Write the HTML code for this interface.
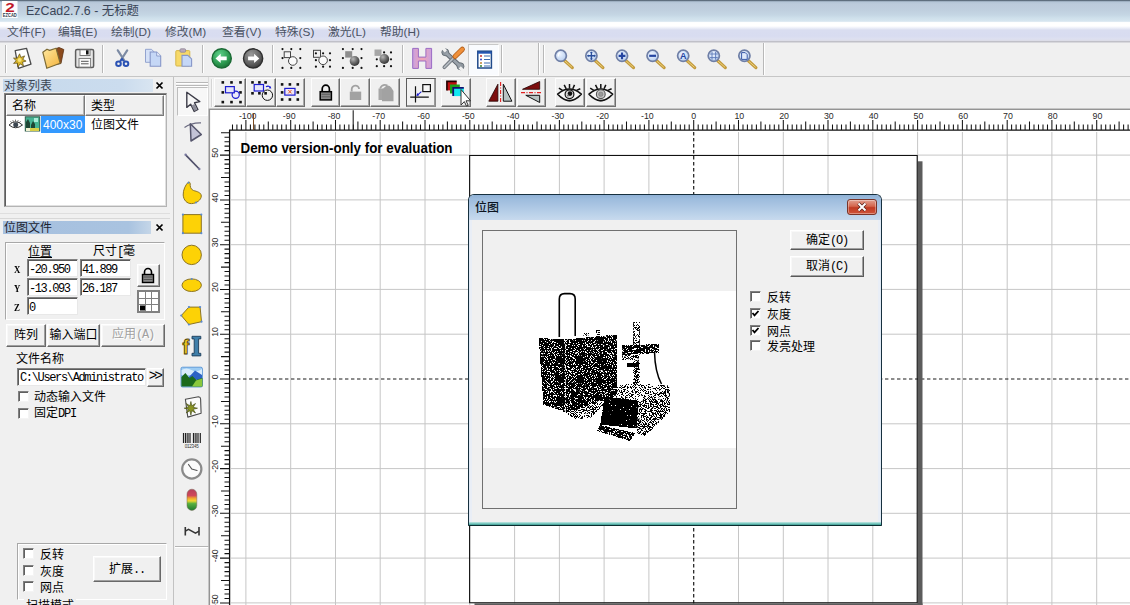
<!DOCTYPE html>
<html lang="zh-CN">
<head>
<meta charset="utf-8">
<title>EzCad2.7.6 - 无标题</title>
<style>
*{box-sizing:border-box;margin:0;padding:0}
html,body{width:1130px;height:605px;overflow:hidden;background:#f0f0f0}
body{position:relative;font-family:"Liberation Sans","Noto Sans CJK SC",sans-serif;font-size:12px;color:#000;line-height:1}
.abs{position:absolute}
#titlebar{position:absolute;left:0;top:0;width:1130px;height:22px;background:linear-gradient(#34424f 0,#8b9cae 1px,#b4c5d6 2px,#bccbdb 4px,#bfcfde 10px,#c5d6e4 15px,#cee0eb 18px,#d6e5ef 21px,#e6eff6 22px)}
#titlebar .ttl{position:absolute;left:26px;top:4px;font-size:12.4px;line-height:14px;color:#3a4658;white-space:nowrap}
#menubar{position:absolute;left:0;top:22px;width:1130px;height:21px;background:linear-gradient(#fbfdfe 0,#ffffff 1px,#ffffff 4px,#eceff9 6px,#d9ddf0 8px,#d8dcf0 14px,#dde0f0 17px,#dcdde8 18.500px,#c0c0c8 19.500px,#d8d8dc 20.500px,#f0f0f0 21px)}
#menubar span{position:absolute;top:3px;font-size:11.8px;line-height:14px;color:#4a5262;white-space:nowrap}
#toolbar{position:absolute;left:0;top:43px;width:1130px;height:34px;background:#f0f0f0;border-bottom:1px solid #c6c6c6}
.sep{position:absolute;width:2px;border-left:1px solid #b8b8b8;border-right:1px solid #fff}
.simsun{font-family:"Liberation Mono","Noto Sans CJK SC",monospace;letter-spacing:-1.2px}
.z{letter-spacing:0}
.cjk{font-family:"Liberation Sans","Noto Sans CJK SC",sans-serif}
.btn{position:absolute;background:#f0f0f0;border:1px solid;border-color:#fff #696969 #696969 #fff;box-shadow:inset -1px -1px 0 #a0a0a0,inset 1px 1px 0 #f8f8f8;text-align:center;white-space:nowrap}
.inp{position:absolute;background:#fff;border:1px solid;border-color:#828282 #e8e8e8 #e8e8e8 #828282;box-shadow:inset 1px 1px 0 #5a5a5a;white-space:nowrap;overflow:hidden}
.chk{position:absolute;width:11px;height:11px;background:#fff;border:1px solid;border-color:#808080 #f4f4f4 #f4f4f4 #808080;box-shadow:inset 1px 1px 0 #606060}
.tb2{position:absolute;top:78px;height:29px;background:#f0f0f0;border:1px solid;border-color:#fdfdfd #6e6e6e #6e6e6e #fdfdfd;box-shadow:inset -1px -1px 0 #a8a8a8}
</style>
</head>
<body>
<div id="titlebar">
 <svg class="abs" style="left:1.500px;top:1px" width="16" height="17" viewBox="0 0 16 17"><rect width="15.500" height="17" fill="#fdfdfd"/><text x="8" y="11.300" font-family="Liberation Sans,sans-serif" font-weight="bold" font-size="13" fill="#c01828" text-anchor="middle" textLength="9.500" lengthAdjust="spacingAndGlyphs">2</text><text x="7.800" y="16.300" font-family="Liberation Sans,sans-serif" font-weight="bold" font-size="4.600" fill="#2c3848" text-anchor="middle" textLength="14" lengthAdjust="spacingAndGlyphs">EZCAD</text></svg>
 <div class="ttl">EzCad2.7.6 - 无标题</div>
</div>
<div id="menubar">
 <span style="left:7px">文件(F)</span><span style="left:58px">编辑(E)</span><span style="left:111px">绘制(D)</span><span style="left:165px">修改(M)</span><span style="left:222px">查看(V)</span><span style="left:275px">特殊(S)</span><span style="left:328px">激光(L)</span><span style="left:380px">帮助(H)</span>
</div>
<div id="toolbar"></div>
<!-- main toolbar icons (page coordinates) -->
<div class="abs" style="left:468px;top:44px;width:31px;height:32px;background:#f9fbfe;border:1px solid;border-color:#c8c8c8 #fff #fff #c8c8c8"></div>
<div class="sep" style="left:5px;top:45px;height:28px"></div>
<div class="sep" style="left:102px;top:45px;height:28px"></div>
<div class="sep" style="left:202px;top:45px;height:28px"></div>
<div class="sep" style="left:272px;top:45px;height:28px"></div>
<div class="sep" style="left:402px;top:45px;height:28px"></div>
<div class="sep" style="left:501px;top:45px;height:28px"></div>
<div class="sep" style="left:538px;top:43px;height:32px"></div>
<div class="sep" style="left:543px;top:45px;height:28px"></div>
<div class="sep" style="left:763px;top:43px;height:32px"></div>
<svg class="abs" style="left:0;top:41px" width="1130" height="36" viewBox="0 41 1130 36">
<defs>
 <linearGradient id="gfold" x1="0" y1="0" x2="1" y2="1"><stop offset="0" stop-color="#ffe9a0"/><stop offset="1" stop-color="#f3b23c"/></linearGradient>
 <radialGradient id="ggreen" cx=".4" cy=".3" r=".8"><stop offset="0" stop-color="#5fd08a"/><stop offset=".6" stop-color="#2c9a50"/><stop offset="1" stop-color="#17662f"/></radialGradient>
 <radialGradient id="ggray" cx=".4" cy=".3" r=".8"><stop offset="0" stop-color="#9a9a9a"/><stop offset=".6" stop-color="#626262"/><stop offset="1" stop-color="#303030"/></radialGradient>
 <radialGradient id="gsph" cx=".35" cy=".3" r=".8"><stop offset="0" stop-color="#b8b8b8"/><stop offset=".5" stop-color="#6a6a6a"/><stop offset="1" stop-color="#2a2a2a"/></radialGradient>
 <radialGradient id="glens" cx=".4" cy=".35" r=".7"><stop offset="0" stop-color="#eef5ff"/><stop offset="1" stop-color="#b6cdef"/></radialGradient>
 <linearGradient id="gH" x1="0" y1="0" x2="1" y2="0"><stop offset="0" stop-color="#c9a0e0"/><stop offset=".5" stop-color="#f2a6b4"/><stop offset="1" stop-color="#c9a0e0"/></linearGradient>
 <g id="mag"><path d="M4 5L11.500 11.800" stroke="#c39a3c" stroke-width="3.200" stroke-linecap="round"/><path d="M4.500 5.500L11 11.300" stroke="#ecd27c" stroke-width="1" stroke-linecap="round"/><circle cx="0" cy="0" r="5.600" fill="url(#glens)" stroke="#6f7fa6" stroke-width="1.700"/></g>
</defs>
<!-- new -->
<path d="M15.200 50.600L26.500 48.300L31 64.200L18.400 68.400Z" fill="#fff" stroke="#4c4c4c" stroke-width="1.300" stroke-linejoin="round"/>
<path d="M19.600 53.800l1.300 3.600 3.700-1.500-1.800 3.500 3.300 1.700-3.600 1.100 1 3.700-3.300-2-2.300 3-0.600-3.800-3.800.3 2.700-2.700-2.700-2.600 3.800.1z" fill="#d9b62c" stroke="#5c4a12" stroke-width=".7"/>
<circle cx="19.600" cy="60" r="2" fill="#f6e27a"/>
<!-- folder -->
<path d="M55 49l4-1.500 4.800 2L61 63.500l-5 1z" fill="#8c4a1c" stroke="#5a3010" stroke-width=".8"/>
<path d="M42.800 52.200l4.200-3 2.600 1.200 6.400-2.200L60.200 63.300 46.800 68.300Z" fill="url(#gfold)" stroke="#7c6a34" stroke-width="1.200" stroke-linejoin="round"/>
<!-- floppy -->
<rect x="75.600" y="49.500" width="18" height="18" rx="1.500" fill="#e6e6e6" stroke="#5e5e5e" stroke-width="1.500"/>
<rect x="80" y="49.800" width="10" height="5.700" fill="#fff" stroke="#6a6a6a" stroke-width=".9"/><rect x="86" y="50.300" width="2.600" height="4.200" fill="#111"/>
<rect x="79" y="58.500" width="11.600" height="8.600" fill="#fafafa" stroke="#777" stroke-width=".9"/><path d="M81 61.300h7.600M81 63.800h7.600" stroke="#555" stroke-width="1"/>
<!-- scissors -->
<path d="M117.800 50.300L124.300 60.500M127.200 50.300L120.600 60.500" stroke="#7c8ba4" stroke-width="2.200" stroke-linecap="round"/>
<circle cx="118.500" cy="63.800" r="2.300" fill="none" stroke="#2a52b4" stroke-width="2"/><circle cx="126" cy="63.800" r="2.300" fill="none" stroke="#2a52b4" stroke-width="2"/>
<path d="M120.300 61.300l1.700-2.300 1.700 2.300" stroke="#2a52b4" stroke-width="1.800" fill="none"/>
<!-- copy -->
<path d="M145.500 49.300h6l3 3v10h-9z" fill="#d5e1f7" stroke="#93a3cf" stroke-width="1"/>
<path d="M150.200 52h6.500l4 4v10.300h-10.500z" fill="#c5d7f6" stroke="#8696c8" stroke-width="1.100"/><path d="M156.700 52v4h4" fill="#e9f0fc" stroke="#8696c8" stroke-width=".9"/>
<!-- paste -->
<rect x="175.800" y="50.600" width="14" height="15.400" rx="1" fill="#f7d968" stroke="#d6b74a" stroke-width="1"/>
<rect x="180" y="48.800" width="5.600" height="3.400" rx="1" fill="#b9a9b9" stroke="#8f8797" stroke-width=".8"/>
<path d="M182 55.400h5.800l3.800 3.500v7.400H182z" fill="#c5d7f6" stroke="#8696c8" stroke-width="1.100"/>
<!-- back / forward -->
<circle cx="221.700" cy="58.400" r="9.600" fill="url(#ggreen)" stroke="#1a6a34" stroke-width="1.400"/>
<path d="M215.500 58.400l5.200-4.600v2.700h6v3.800h-6v2.700z" fill="#fff"/>
<circle cx="253.100" cy="58.400" r="9.600" fill="url(#ggray)" stroke="#2e2e2e" stroke-width="1.400"/>
<path d="M259.300 58.400l-5.200-4.600v2.700h-6v3.800h6v2.700z" fill="#fff"/>
<!-- group icons -->
<g fill="#111">
<circle cx="282.500" cy="49.100" r="1.100"/><circle cx="291.300" cy="49.100" r="1.100"/><circle cx="300.300" cy="49.100" r="1.100"/><circle cx="282.500" cy="58.100" r="1.100"/><circle cx="300.300" cy="58.100" r="1.100"/><circle cx="282.500" cy="67.900" r="1.100"/><circle cx="291.300" cy="67.900" r="1.100"/><circle cx="300.300" cy="67.900" r="1.100"/>
<circle cx="315.900" cy="53.300" r="1.100"/><circle cx="323.100" cy="53.300" r="1.100"/><circle cx="330" cy="53.300" r="1.100"/><circle cx="315.900" cy="60.200" r="1.100"/><circle cx="330" cy="60.200" r="1.100"/><circle cx="315.900" cy="66.700" r="1.100"/><circle cx="323.100" cy="66.700" r="1.100"/><circle cx="330" cy="66.700" r="1.100"/>
<circle cx="342.900" cy="49.100" r="1.100"/><circle cx="352.700" cy="49.100" r="1.100"/><circle cx="361.500" cy="49.100" r="1.100"/><circle cx="342.900" cy="58.100" r="1.100"/><circle cx="361.500" cy="58.100" r="1.100"/><circle cx="342.900" cy="67.900" r="1.100"/><circle cx="352.700" cy="67.900" r="1.100"/><circle cx="361.500" cy="67.900" r="1.100"/>
<circle cx="376.800" cy="52.400" r="1.100"/><circle cx="384.100" cy="52.400" r="1.100"/><circle cx="391" cy="52.400" r="1.100"/><circle cx="376.800" cy="59.300" r="1.100"/><circle cx="391" cy="59.300" r="1.100"/><circle cx="376.800" cy="66.200" r="1.100"/><circle cx="384.100" cy="66.200" r="1.100"/><circle cx="391" cy="66.200" r="1.100"/>
</g>
<rect x="284.200" y="51.800" width="6.300" height="5.800" fill="#f4f4f4" stroke="#444" stroke-width="1"/><circle cx="292.800" cy="61" r="4.300" fill="#fbfbfb" stroke="#444" stroke-width="1"/>
<rect x="313.500" y="50.300" width="7" height="7" fill="none" stroke="#444" stroke-width="1"/><circle cx="323.100" cy="60.300" r="4.300" fill="#fbfbfb" stroke="#444" stroke-width="1"/>
<rect x="345.200" y="51.200" width="7" height="6.400" fill="#8e8e8e"/><circle cx="354.600" cy="61" r="4.900" fill="url(#gsph)"/>
<rect x="374.500" y="49.500" width="7" height="6.400" fill="#a6a6a6"/><circle cx="384.300" cy="59" r="4.900" fill="url(#gsph)"/>
<!-- H -->
<path d="M412.700 48.400h5.700v8.700h7.500v-8.700h5.700v20h-5.700v-7.400h-7.500v7.400h-5.700z" fill="url(#gH)" stroke="#9a6cc4" stroke-width="1"/>
<!-- tools -->
<path d="M446 53L460 66" stroke="#5c646c" stroke-width="4.600"/><circle cx="445.300" cy="52.300" r="3.500" fill="#8e969e" stroke="#5c646c" stroke-width=".8"/><circle cx="460.500" cy="66.300" r="3.500" fill="#8e969e" stroke="#5c646c" stroke-width=".8"/>
<path d="M446 53L460 66" stroke="#9aa2aa" stroke-width="3"/>
<path d="M441.200 48.800l3.600 3.600 2.200-2.200-3.600-3.600z" fill="#f0f0f0"/><path d="M464.400 69.800l-3.600-3.600-2.200 2.200 3.600 3.600z" fill="#f0f0f0"/>
<path d="M455 56.500L444.300 67.300" stroke="#6a7078" stroke-width="3.600" stroke-linecap="round"/><path d="M455 56.500L444.300 67.300" stroke="#b4bac0" stroke-width="1.800" stroke-linecap="round"/>
<path d="M462.300 49.300L455 56.500" stroke="#b4601c" stroke-width="5.200" stroke-linecap="round"/><path d="M462.300 49.300L455.200 56.300" stroke="#f0903a" stroke-width="3.600" stroke-linecap="round"/>
<!-- list -->
<rect x="477.800" y="51.200" width="13.600" height="16.800" fill="#fff" stroke="#1f4a8a" stroke-width="1.500"/>
<path d="M477.800 52.700h13.600" stroke="#2456b4" stroke-width="2"/>
<path d="M484 56h6M484 59.500h6M484 63h6M484 66h6" stroke="#3a6ab0" stroke-width="1"/>
<circle cx="481" cy="56" r="1" fill="#c03030"/><circle cx="481" cy="59.500" r="1" fill="#3040c0"/><circle cx="481" cy="63" r="1" fill="#c08030"/><circle cx="481" cy="66" r="1" fill="#308030"/>
<!-- magnifiers -->
<use href="#mag" x="560.800" y="55.800"/><use href="#mag" x="591.400" y="55.800"/><use href="#mag" x="622" y="55.800"/><use href="#mag" x="652.600" y="55.800"/><use href="#mag" x="683.200" y="55.800"/><use href="#mag" x="713.800" y="55.800"/><use href="#mag" x="744.400" y="55.800"/>
<path d="M560 52.500c-1.500 1-2 2.500-1.800 4" stroke="#fff" stroke-width="1.200" fill="none"/>
<path d="M587.600 55.800h7.600M591.400 52v7.600" stroke="#2a4f9c" stroke-width="1.400"/><path d="M587 55.800l1.600-1.400v2.800zM595.800 55.800l-1.600-1.400v2.800zM591.400 51.400l-1.400 1.600h2.800zM591.400 60.200l-1.400-1.600h2.800z" fill="#2a4f9c"/>
<path d="M618.600 55.800h6.800M622 52.400v6.800" stroke="#2444a0" stroke-width="2.200"/>
<path d="M649.200 55.800h6.800" stroke="#2444a0" stroke-width="2.200"/>
<text x="683.200" y="59" font-family="Liberation Sans,sans-serif" font-size="9" font-weight="bold" fill="#2444a0" text-anchor="middle">A</text>
<path d="M709.800 54h8M709.800 57.600h8M712 51.800v8M715.600 51.800v8" stroke="#5a78b8" stroke-width=".9"/>
<path d="M741.600 52.600h3.600l2 2v4.800h-5.600z" fill="#dfe9fa" stroke="#3a5aa8" stroke-width="1"/>
</svg>
<!-- left panel -->
<div class="abs" style="left:0;top:77px;width:174px;height:528px;background:#f0f0f0;border-right:1px solid #c2c2c2"></div>
<div class="abs" style="left:3px;top:79px;width:150px;height:13px;background:linear-gradient(90deg,#c6d9ec,#cbdcee 80%,#d9e5f1)"></div>
<div class="abs cjk" style="left:4px;top:80px;font-size:12px;line-height:13px;color:#3c4654">对象列表</div>
<svg class="abs" style="left:155px;top:81px" width="9" height="9" viewBox="0 0 9 9"><path d="M1.5 1.5L7.5 7.5M7.5 1.5L1.5 7.5" stroke="#000" stroke-width="1.7"/></svg>
<div class="abs" style="left:4px;top:93px;width:163px;height:114px;background:#fff;border:1px solid;border-color:#828282 #b4b4b4 #b4b4b4 #828282;box-shadow:inset 1px 1px 0 #5c5c5c,inset -1px -1px 0 #e0e0e0"></div>
<div class="abs" style="left:6px;top:95px;width:79px;height:21px;background:#f0f0f0;border:1px solid;border-color:#fff #7a7a7a #7a7a7a #fff;box-shadow:inset -1px -1px 0 #b4b4b4"></div>
<div class="abs" style="left:85px;top:95px;width:79px;height:21px;background:#f0f0f0;border:1px solid;border-color:#fff #7a7a7a #7a7a7a #fff;box-shadow:inset -1px -1px 0 #b4b4b4"></div>
<div class="abs cjk" style="left:12px;top:99px;font-size:12px;line-height:14px">名称</div>
<div class="abs cjk" style="left:91px;top:99px;font-size:12px;line-height:14px">类型</div>
<div class="abs" style="left:41px;top:116px;width:44px;height:17px;background:#3399ff"></div>
<div class="abs" style="left:43px;top:118px;font-size:12px;line-height:14px;color:#fff">400x30</div>
<div class="abs cjk" style="left:91px;top:118px;font-size:12px;line-height:14px">位图文件</div>
<svg class="abs" style="left:8px;top:116px" width="34" height="18" viewBox="8 116 34 18">
 <path d="M9 125Q15.500 118.500 22.500 125Q15.500 130.500 9 125Z" fill="#fff" stroke="#333" stroke-width="1"/><circle cx="15.700" cy="124.800" r="2.500" fill="#3c4650"/>
 <path d="M10.500 121.300l1.200 1.500M15.500 119.600v1.700M20.500 121.300l-1.200 1.500M12.800 120.200l.7 1.600M18.200 120.200l-.7 1.600" stroke="#444" stroke-width=".8"/>
 <rect x="25.300" y="116.800" width="14.400" height="14.200" fill="#46b494" stroke="#2c5a48" stroke-width="1"/>
 <path d="M26 131v-9l2-3 2 4v8zM31 131v-6l2-4 2 3v7z" fill="#1e4634"/>
 <path d="M30 131v-3h9v3z" fill="#d8d048"/><path d="M34 118h4v4h-4z" fill="#a8ecd8"/><path d="M26 128h4v3h-4z" fill="#f0f0d0"/>
</svg>
<div class="abs" style="left:0;top:213px;width:170px;height:6px;border-top:1px solid #dedede;border-bottom:1px solid #d8d8d8"></div>
<div class="abs" style="left:3px;top:221px;width:148px;height:13px;background:linear-gradient(90deg,#a6c0df,#a9c3e0 85%,#c5d6e8)"></div>
<div class="abs cjk" style="left:4px;top:221px;font-size:12px;line-height:14px;color:#1c2430">位图文件</div>
<svg class="abs" style="left:155px;top:223px" width="9" height="9" viewBox="0 0 9 9"><path d="M1.5 1.5L7.5 7.5M7.5 1.5L1.5 7.5" stroke="#000" stroke-width="1.7"/></svg>
<!-- group box -->
<div class="abs" style="left:5px;top:242px;width:160px;height:78px;border:1px solid;border-color:#a8a8a8 #fff #fff #a8a8a8;box-shadow:inset 1px 1px 0 #fff,1px 1px 0 #fff inset"></div>
<div class="abs cjk" style="left:28px;top:245px;font-size:12px;line-height:14px;text-decoration:underline">位置</div>
<div class="abs simsun" style="left:93px;top:245px;font-size:12px;line-height:14px"><span class="z">尺寸</span>[<span class="z">毫</span></div>
<div class="abs" style="left:14px;top:263px;font-family:'Liberation Serif',serif;font-weight:bold;font-size:11px;line-height:12px;transform:scaleX(.8);transform-origin:0 0">X</div>
<div class="abs" style="left:14px;top:282px;font-family:'Liberation Serif',serif;font-weight:bold;font-size:11px;line-height:12px;transform:scaleX(.8);transform-origin:0 0">Y</div>
<div class="abs" style="left:14px;top:301px;font-family:'Liberation Serif',serif;font-weight:bold;font-size:11px;line-height:12px;transform:scaleX(.8);transform-origin:0 0">Z</div>
<div class="inp simsun" style="left:27px;top:259px;width:51px;height:18px;padding:4px 0 0 1px;font-size:12px;line-height:12px;letter-spacing:-1.4px">-20.950</div>
<div class="inp simsun" style="left:80px;top:259px;width:51px;height:18px;padding:4px 0 0 1px;font-size:12px;line-height:12px;letter-spacing:-1.4px">41.899</div>
<div class="inp simsun" style="left:27px;top:278px;width:51px;height:18px;padding:4px 0 0 1px;font-size:12px;line-height:12px;letter-spacing:-1.4px">-13.093</div>
<div class="inp simsun" style="left:80px;top:278px;width:51px;height:18px;padding:4px 0 0 1px;font-size:12px;line-height:12px;letter-spacing:-1.4px">26.187</div>
<div class="inp simsun" style="left:27px;top:297px;width:51px;height:18px;padding:4px 0 0 1px;font-size:12px;line-height:12px;letter-spacing:-1.4px">0</div>
<div class="btn" style="left:137px;top:264px;width:23px;height:23px"></div>
<svg class="abs" style="left:137px;top:264px" width="23" height="23" viewBox="0 0 23 23"><rect x="5.5" y="10.5" width="11" height="8" fill="#8a8a8a" stroke="#000" stroke-width="1.4"/><path d="M7.5 10.5V8a3.5 3.5 0 0 1 7 0v2.5" fill="none" stroke="#000" stroke-width="1.6"/><path d="M6.5 13h9M6.5 15.5h9" stroke="#444" stroke-width=".8"/></svg>
<div class="abs" style="left:137px;top:290px;width:23px;height:23px;background:#fff;border:2px solid #808080"></div>
<svg class="abs" style="left:137px;top:290px" width="23" height="23" viewBox="0 0 23 23"><path d="M8.5 2v19M14.5 2v19M2 8.500h19M2 14.500h19" stroke="#808080" stroke-width="1"/><rect x="3" y="15.500" width="5" height="5" fill="#000"/></svg>
<div class="btn cjk" style="left:6px;top:324px;width:40px;height:23px;font-size:12px;line-height:20px">阵列</div>
<div class="btn cjk" style="left:47px;top:324px;width:53px;height:23px;font-size:12px;line-height:20px">输入端口</div>
<div class="btn simsun" style="left:101px;top:324px;width:64px;height:23px;font-size:12px;line-height:20px;color:#a0a0a0;text-shadow:1px 1px 0 #fff"><span class="z">应用</span>(A)</div>
<div class="abs cjk" style="left:16px;top:352px;font-size:12px;line-height:14px">文件名称</div>
<div class="inp simsun" style="left:17px;top:368px;width:129px;height:18px;padding:3px 0 0 2px;font-size:12px;line-height:12px;letter-spacing:-1.35px">C:\Users\Administrato</div>
<div class="btn simsun" style="left:147px;top:368px;width:17px;height:19px;font-size:14px;line-height:15px;letter-spacing:-2.6px;text-indent:-2px">&gt;&gt;</div>
<div class="chk" style="left:18px;top:391px"></div>
<div class="abs cjk" style="left:34px;top:390px;font-size:12px;line-height:14px">动态输入文件</div>
<div class="chk" style="left:18px;top:408px"></div>
<div class="abs simsun" style="left:34px;top:407px;font-size:12px;line-height:14px"><span class="z">固定</span>DPI</div>
<!-- bottom group -->
<div class="abs" style="left:17px;top:543px;width:150px;height:57px;border:1px solid;border-color:#a8a8a8 #fff #fff #a8a8a8;box-shadow:inset 1px 1px 0 #fff"></div>
<div class="chk" style="left:23px;top:548px"></div>
<div class="chk" style="left:23px;top:565px"></div>
<div class="chk" style="left:23px;top:581px"></div>
<div class="abs cjk" style="left:40px;top:548px;font-size:12px;line-height:14px">反转</div>
<div class="abs cjk" style="left:40px;top:565px;font-size:12px;line-height:14px">灰度</div>
<div class="abs cjk" style="left:40px;top:581px;font-size:12px;line-height:14px">网点</div>
<div class="btn simsun" style="left:93px;top:556px;width:68px;height:26px;font-size:12px;line-height:26px"><span class="z">扩展</span>..</div>
<div class="abs cjk" style="left:24px;top:599px;font-size:12px;line-height:14px;background:#f0f0f0;padding:0 2px">扫描模式</div>
<!-- tools column + second toolbar -->
<div class="abs" style="left:208px;top:77px;width:1px;height:470px;background:#dadada"></div>
<div class="abs" style="left:175px;top:546px;width:34px;height:2px;border-top:1px solid #b4b4b4;border-bottom:1px solid #fff"></div>
<div class="abs" style="left:176px;top:82px;width:32px;height:2px;border-top:1px solid #b8b8b8;border-bottom:1px solid #fff"></div>
<div class="abs" style="left:176px;top:85px;width:32px;height:2px;border-top:1px solid #b8b8b8;border-bottom:1px solid #fff"></div>
<div class="abs" style="left:177px;top:87px;width:31px;height:29px;background:#f7f7f7;border:1px solid;border-color:#bdbdbd #fff #fff #bdbdbd"></div>
<div class="abs" style="left:211px;top:79px;width:2px;height:28px;border-left:1px solid #d4d4d4;border-right:1px solid #fafafa"></div>
<div class="tb2" style="left:214px;width:32px"></div><div class="tb2" style="left:246px;width:30px"></div><div class="tb2" style="left:276px;width:29px"></div>
<div class="tb2" style="left:311px;width:29px"></div><div class="tb2" style="left:340px;width:30px"></div><div class="tb2" style="left:370px;width:30px"></div>
<div class="abs" style="left:406px;top:78px;width:30px;height:29px;background:#f2f2f2;border:1px solid;border-color:#5c5c5c #8a8a8a #8a8a8a #5c5c5c;box-shadow:inset -1px -1px 0 #9a9a9a"></div>
<div class="tb2" style="left:441px;width:30px"></div>
<div class="tb2" style="left:486px;width:30px"></div><div class="tb2" style="left:517px;width:29px"></div>
<div class="tb2" style="left:555px;width:30px"></div><div class="tb2" style="left:586px;width:30px"></div>
<svg class="abs" style="left:174px;top:77px" width="460" height="475" viewBox="174 77 460 475" font-family="Liberation Sans,sans-serif">
<defs>
 <linearGradient id="gsky" x1="0" y1="0" x2="0" y2="1"><stop offset="0" stop-color="#2a6ad8"/><stop offset=".5" stop-color="#7ab8f0"/><stop offset=".55" stop-color="#3a9a3a"/><stop offset="1" stop-color="#1e6a22"/></linearGradient>
 <linearGradient id="gtl" x1="0" y1="0" x2="0" y2="1"><stop offset="0" stop-color="#b4405c"/><stop offset=".3" stop-color="#d0485a"/><stop offset=".42" stop-color="#f0a030"/><stop offset=".55" stop-color="#f0d830"/><stop offset=".68" stop-color="#58b040"/><stop offset="1" stop-color="#1e7a30"/></linearGradient>
 <g id="eye"><path d="M-11.800 0Q-6 -5.200 0 -5.200Q6 -5.200 11.800 0Q6 6.300 0 6.300Q-6 6.300 -11.800 0Z" fill="#f6f6f6" stroke="#111" stroke-width="1.600" stroke-linejoin="round"/><path d="M0 -5.800V-10.300M-3.300 -5.400L-5.300 -9.300M3.300 -5.400L5 -9.300M-7 -3.800L-10.600 -6M7 -3.800L10.800 -5.400" stroke="#111" stroke-width="1.500"/><path d="M-3.500 6Q0 7.200 3.500 6" stroke="#111" stroke-width="1.400" fill="none"/></g>
</defs>
<!-- arrow tool -->
<path d="M186.800 92.300V107.400L190.700 104.300L194.200 111.400L197.900 109.500L194.500 102.800L199.800 101.600Z" fill="#f6f6f6" stroke="#3c3c48" stroke-width="1.400" stroke-linejoin="round"/>
<path d="M191.500 105.500l3 5.500 2.800-1.400-2.800-5.500z" fill="#8c8c98"/>
<!-- node tool -->
<path d="M184.500 127.500Q191 122.500 201 122.800" fill="none" stroke="#6a6a80" stroke-width="1.200"/>
<path d="M190.300 123.800L191 141L201.300 134.500Z" fill="#c2c2d6" stroke="#55556c" stroke-width="1.500" stroke-linejoin="round"/>
<!-- line tool -->
<path d="M185.600 154.800L199.300 169" stroke="#50506a" stroke-width="1.700"/><circle cx="185.600" cy="154.800" r="1.200" fill="#7a7aa0"/><circle cx="199.300" cy="169" r="1.200" fill="#7a7aa0"/>
<!-- blob -->
<path d="M188 182.500C185.500 185 183 190 183.200 195C183.500 200 187 203.800 191.500 203.600C196.500 203.400 201.200 200 201.300 196C201.300 192.500 197 191.500 193.500 190.500C190.500 189.500 190 186 190.200 183.500C190 182 188.800 181.800 188 182.500Z" fill="#fdd206" stroke="#8c7424" stroke-width="1"/><circle cx="188.500" cy="182.800" r="1" fill="#5a8ad0"/><circle cx="196" cy="202.600" r="1" fill="#5a8ad0"/>
<!-- square -->
<rect x="182.900" y="214.600" width="18.400" height="18.600" fill="#fdd206" stroke="#8c7424" stroke-width="1"/>
<g fill="#5a8ad0"><circle cx="182.900" cy="214.600" r="1.100"/><circle cx="201.300" cy="214.600" r="1.100"/><circle cx="182.900" cy="233.200" r="1.100"/><circle cx="201.300" cy="233.200" r="1.100"/></g>
<!-- circle -->
<circle cx="191.700" cy="254.900" r="9.700" fill="#fdd206" stroke="#8c7424" stroke-width="1"/>
<!-- ellipse -->
<ellipse cx="191.700" cy="285.200" rx="9.700" ry="6.300" fill="#fdd206" stroke="#8c7424" stroke-width="1"/><circle cx="191.700" cy="279" r="1" fill="#5a8ad0"/>
<!-- polygon -->
<path d="M188.900 307.100L200.100 307.100L201.500 321.700L188.900 324.500L181.300 315.500Z" fill="#fdd206" stroke="#8c7424" stroke-width="1"/>
<g fill="#5a8ad0"><circle cx="188.900" cy="307.100" r="1.100"/><circle cx="200.100" cy="307.100" r="1.100"/><circle cx="201.500" cy="321.700" r="1.100"/><circle cx="188.900" cy="324.500" r="1.100"/><circle cx="181.300" cy="315.500" r="1.100"/></g>
<!-- text tool -->
<text x="182.600" y="354.200" font-size="20" font-weight="bold" fill="#f6cf22" stroke="#4a3c0c" stroke-width=".9" font-family="Liberation Sans,sans-serif">f</text>
<path d="M192 336.300h8.800v2.600h-2.200v14.400h2.200v2.600H192v-2.600h2.200v-14.400H192z" fill="#3f7faa" stroke="#1c3c58" stroke-width=".9"/>
<!-- image -->
<rect x="181" y="367.200" width="21.400" height="19.800" rx="1.500" fill="#9cccf4" stroke="#4a8ad0" stroke-width=".8"/>
<path d="M181.500 370q5-3 10 0t10.500-1v6h-20.500z" fill="#d8ecfc"/>
<path d="M188 378l7-7.500 7 4.500v6z" fill="#2c62c4"/>
<path d="M181.400 377l4-4 4 5 3-2 4 4 6-2v8.600h-21z" fill="#1c6a1c"/>
<path d="M192 386.600l4-6 6.200-2v8z" fill="#8ac83c"/>
<!-- vector file -->
<path d="M185.400 399.200L198.500 396.800Q200.500 397 200.600 399L201.100 413.200L187.800 417.100Z" fill="#fbfbfb" stroke="#4c4c4c" stroke-width="1.100" stroke-linejoin="round"/>
<path d="M190.900 401.500l.9 4.300 3.700-2.300-2.300 3.800 4.300.9-4.300 1.100 2.300 3.700-3.700-2.300-.9 4.400-1-4.400-3.700 2.300 2.300-3.700-4.300-1.100 4.300-.9-2.300-3.800 3.700 2.300z" fill="#8a9422" stroke="#3c4410" stroke-width=".6"/>
<!-- barcode -->
<path d="M183.500 433v10M185.500 433v10M188 433v10M190 433v10M193.500 433v10M196 433v10M198 433v10M200.300 433v10" stroke="#222" stroke-width="1.200"/><path d="M187 433v10M195 433v10" stroke="#222" stroke-width=".6"/>
<text x="191.700" y="447.600" font-size="4.500" fill="#333" text-anchor="middle" textLength="14">012345</text>
<!-- clock -->
<circle cx="191.800" cy="469" r="9.600" fill="#fbfbfb" stroke="#8a8a8a" stroke-width="2.200"/><path d="M191.800 469L188.500 464.500M191.800 469L197 470.500" stroke="#555" stroke-width="1.200" stroke-linecap="round"/>
<!-- traffic light -->
<rect x="187" y="489.200" width="9.800" height="21.200" rx="4.900" fill="url(#gtl)" stroke="#7a6a5a" stroke-width=".5"/>
<!-- encoder -->
<path d="M185.300 527v8.400M199 527v8.400" stroke="#333" stroke-width="1.600" fill="none"/><path d="M185.300 531.200L188.500 529.300L195.500 533.200L199 531.200" stroke="#333" stroke-width="1.400" fill="none"/>

<!-- toolbar2 icons -->
<g fill="#111"><rect x="221.500" y="81.100" width="2.600" height="2.600"/><rect x="230.200" y="81.100" width="2.600" height="2.600"/><rect x="239.200" y="81.100" width="2.600" height="2.600"/><rect x="221.500" y="91.100" width="2.600" height="2.600"/><rect x="239.200" y="91.100" width="2.600" height="2.600"/><rect x="221.500" y="100.800" width="2.600" height="2.600"/><rect x="230.200" y="100.800" width="2.600" height="2.600"/><rect x="239.200" y="100.800" width="2.600" height="2.600"/>
<rect x="251.200" y="81.100" width="2.600" height="2.600"/><rect x="258.100" y="81.100" width="2.600" height="2.600"/><rect x="264.300" y="81.100" width="2.600" height="2.600"/><rect x="251.200" y="92" width="2.600" height="2.600"/><rect x="258.100" y="92" width="2.600" height="2.600"/><rect x="264.300" y="92" width="2.600" height="2.600"/>
<rect x="280.800" y="83.100" width="2.600" height="2.600"/><rect x="288.600" y="83.100" width="2.600" height="2.600"/><rect x="296.500" y="83.100" width="2.600" height="2.600"/><rect x="280.800" y="91.100" width="2.600" height="2.600"/><rect x="296.500" y="91.100" width="2.600" height="2.600"/><rect x="280.800" y="98.200" width="2.600" height="2.600"/><rect x="288.600" y="98.200" width="2.600" height="2.600"/><rect x="296.500" y="98.200" width="2.600" height="2.600"/></g>
<circle cx="235.700" cy="94.700" r="3.600" fill="#eceafa" stroke="#1c1cd0" stroke-width="1.200"/><rect x="225.500" y="86.600" width="8.800" height="6.200" fill="#e6e6f8" stroke="#1c1cd0" stroke-width="1.200"/>
<circle cx="267.400" cy="95.200" r="5.200" fill="none" stroke="#111" stroke-width="1"/><rect x="254.200" y="84.500" width="9.300" height="6.500" fill="#e6e6f8" stroke="#1c1cd0" stroke-width="1.200"/><path d="M266 86.800Q268.500 85 270.300 87.300" fill="none" stroke="#1c1cd0" stroke-width="1.200"/><path d="M271.300 88.600l-2.600-.3 1.900-2.100z" fill="#1c1cd0"/>
<rect x="284.800" y="88.400" width="10.200" height="6.700" fill="#f0e6f4" stroke="#1c1cd0" stroke-width="1.200"/><path d="M288.300 90l3.200 3.400M291.500 90l-3.200 3.400" stroke="#e05a20" stroke-width="1"/>
<!-- locks -->
<rect x="320.200" y="91.700" width="11.200" height="8.200" fill="#8a8a8a" stroke="#000" stroke-width="1.500"/><path d="M322.200 91.500V89a3.600 3.800 0 0 1 7.200 0v2.500" fill="none" stroke="#000" stroke-width="1.700"/><path d="M321.500 94.300h8.800M321.500 96.800h8.800" stroke="#555" stroke-width=".8"/>
<rect x="349.800" y="91.600" width="11.400" height="8.400" fill="#a2a2a2"/><path d="M351.700 91.500V89.500a3.700 3.700 0 0 1 7.400 -.5" fill="none" stroke="#a2a2a2" stroke-width="1.800"/>
<path d="M378.500 88.500h4.500v11.500h-4.500z" fill="#a6a6a6"/><path d="M382 89.500l4-3.500q3-1.300 5.200 1.500l2.300 3.500v10.200H382z" fill="#a2a2a2"/><path d="M380 88.500q2.500-5 7.500-3" fill="none" stroke="#a2a2a2" stroke-width="1.600"/>
<!-- origin icon -->
<path d="M415.500 86.200V102.600M410.200 97.200H428.800" stroke="#111" stroke-width="1.200"/><rect x="422.800" y="84.600" width="7.600" height="7" fill="#f6f6f6" stroke="#111" stroke-width="1.200"/><path d="M421.400 91.700L417.200 95.300" stroke="#1c1cd0" stroke-width="1.100"/><path d="M416.300 96.100l1-3 2 2.200z" fill="#1c1cd0"/>
<!-- layers -->
<rect x="446.900" y="81.400" width="9.800" height="9" fill="#c01010"/><path d="M446.900 90.400V81.400h9.800" fill="none" stroke="#200000" stroke-width="1.600"/>
<rect x="450" y="84.500" width="9.800" height="9" fill="#18a018"/>
<rect x="452.800" y="87.500" width="11" height="8.600" fill="#10e8f0"/><path d="M453.200 96V87.900h10.600" fill="none" stroke="#101070" stroke-width="1.800"/>
<path d="M461 89.500V105l3.300-3.400 2.200 4.500 1.700-.8-2.200-4.500h4.600z" fill="#fff" stroke="#333" stroke-width="1"/>
<!-- mirrors -->
<path d="M488.800 101.200H497.900V84.200Z" fill="#7c0c0c" stroke="#200" stroke-width=".8"/><path d="M500.600 82V103.500" stroke="#e02020" stroke-width="1.100" stroke-dasharray="4 1.500 1 1.500"/><path d="M503.300 84.200V101.200H511.900Z" fill="#b8c2c2" stroke="#111" stroke-width="1"/>
<path d="M522.500 89.300H539.700V81.500Z" fill="#7c0c0c" stroke="#200" stroke-width=".8"/><path d="M521 92.600H542.500" stroke="#e02020" stroke-width="1.100" stroke-dasharray="4 1.500 1 1.500"/><path d="M525.800 95.300H539.700V102.500Z" fill="#b8c2c2" stroke="#111" stroke-width="1"/>
<!-- eyes -->
<use href="#eye" x="569.500" y="94.200"/><circle cx="569.500" cy="94.200" r="4.400" fill="#d8d8d8" stroke="#111" stroke-width="1.200"/><circle cx="570" cy="93.600" r="2.300" fill="#111"/><circle cx="568" cy="95.600" r="1" fill="#777"/>
<use href="#eye" x="600.800" y="94.200"/><circle cx="600.800" cy="94.200" r="4.400" fill="#c4c4c4" stroke="#555" stroke-width="1.100"/><circle cx="600.800" cy="94.200" r="2.200" fill="#9a9a9a" stroke="#777" stroke-width=".6"/>
</svg>
<svg class="abs" style="left:0;top:0" width="1130" height="605" viewBox="0 0 1130 605" font-family="Liberation Sans, sans-serif">
<rect x="208.5" y="108.5" width="922" height="497" fill="#fff"/>
<path d="M209.3 605V109.3H1130" fill="none" stroke="#949494" stroke-width="1.6"/>
<path d="M245.9 132V605M290.7 132V605M335.5 132V605M380.2 132V605M425.0 132V605M469.8 132V605M514.6 132V605M559.4 132V605M604.1 132V605M648.9 132V605M738.5 132V605M783.3 132V605M828.0 132V605M872.8 132V605M917.6 132V605M962.4 132V605M1007.2 132V605M1051.9 132V605M1096.7 132V605M231 602.9H1130M231 558.1H1130M231 513.3H1130M231 468.6H1130M231 423.8H1130M231 334.2H1130M231 289.4H1130M231 244.7H1130M231 199.9H1130M231 155.1H1130" stroke="#c6c6c6" stroke-width="1" fill="none"/>
<path d="M693.7 132V605M231 379.0H1130" stroke="#1a1a1a" stroke-width="1.2" stroke-dasharray="3.4 2.6" fill="none"/>
<rect x="917.7" y="161.3" width="4.8" height="445" fill="#5c5c5c"/>
<rect x="474.5" y="603.4" width="448" height="3" fill="#5c5c5c"/>
<path d="M469.6 155.5H917.2V602.8H469.6Z" fill="none" stroke="#111" stroke-width="1.1"/>
<path d="M232.5 124.5V130M236.9 124.5V130M241.4 124.5V130M245.9 120V130M250.4 124.5V130M254.9 124.5V130M259.3 124.5V130M263.8 124.5V130M268.3 121.5V130M272.8 124.5V130M277.2 124.5V130M281.7 124.5V130M286.2 124.5V130M290.7 120V130M295.2 124.5V130M299.6 124.5V130M304.1 124.5V130M308.6 124.5V130M313.1 121.5V130M317.5 124.5V130M322.0 124.5V130M326.5 124.5V130M331.0 124.5V130M335.5 120V130M339.9 124.5V130M344.4 124.5V130M348.9 124.5V130M353.4 124.5V130M357.9 121.5V130M362.3 124.5V130M366.8 124.5V130M371.3 124.5V130M375.8 124.5V130M380.2 120V130M384.7 124.5V130M389.2 124.5V130M393.7 124.5V130M398.2 124.5V130M402.6 121.5V130M407.1 124.5V130M411.6 124.5V130M416.1 124.5V130M420.5 124.5V130M425.0 120V130M429.5 124.5V130M434.0 124.5V130M438.5 124.5V130M442.9 124.5V130M447.4 121.5V130M451.9 124.5V130M456.4 124.5V130M460.8 124.5V130M465.3 124.5V130M469.8 120V130M474.3 124.5V130M478.8 124.5V130M483.2 124.5V130M487.7 124.5V130M492.2 121.5V130M496.7 124.5V130M501.1 124.5V130M505.6 124.5V130M510.1 124.5V130M514.6 120V130M519.1 124.5V130M523.5 124.5V130M528.0 124.5V130M532.5 124.5V130M537.0 121.5V130M541.4 124.5V130M545.9 124.5V130M550.4 124.5V130M554.9 124.5V130M559.4 120V130M563.8 124.5V130M568.3 124.5V130M572.8 124.5V130M577.3 124.5V130M581.8 121.5V130M586.2 124.5V130M590.7 124.5V130M595.2 124.5V130M599.7 124.5V130M604.1 120V130M608.6 124.5V130M613.1 124.5V130M617.6 124.5V130M622.1 124.5V130M626.5 121.5V130M631.0 124.5V130M635.5 124.5V130M640.0 124.5V130M644.4 124.5V130M648.9 120V130M653.4 124.5V130M657.9 124.5V130M662.4 124.5V130M666.8 124.5V130M671.3 121.5V130M675.8 124.5V130M680.3 124.5V130M684.7 124.5V130M689.2 124.5V130M693.7 120V130M698.2 124.5V130M702.7 124.5V130M707.1 124.5V130M711.6 124.5V130M716.1 121.5V130M720.6 124.5V130M725.0 124.5V130M729.5 124.5V130M734.0 124.5V130M738.5 120V130M743.0 124.5V130M747.4 124.5V130M751.9 124.5V130M756.4 124.5V130M760.9 121.5V130M765.3 124.5V130M769.8 124.5V130M774.3 124.5V130M778.8 124.5V130M783.3 120V130M787.7 124.5V130M792.2 124.5V130M796.7 124.5V130M801.2 124.5V130M805.7 121.5V130M810.1 124.5V130M814.6 124.5V130M819.1 124.5V130M823.6 124.5V130M828.0 120V130M832.5 124.5V130M837.0 124.5V130M841.5 124.5V130M846.0 124.5V130M850.4 121.5V130M854.9 124.5V130M859.4 124.5V130M863.9 124.5V130M868.3 124.5V130M872.8 120V130M877.3 124.5V130M881.8 124.5V130M886.3 124.5V130M890.7 124.5V130M895.2 121.5V130M899.7 124.5V130M904.2 124.5V130M908.6 124.5V130M913.1 124.5V130M917.6 120V130M922.1 124.5V130M926.6 124.5V130M931.0 124.5V130M935.5 124.5V130M940.0 121.5V130M944.5 124.5V130M948.9 124.5V130M953.4 124.5V130M957.9 124.5V130M962.4 120V130M966.9 124.5V130M971.3 124.5V130M975.8 124.5V130M980.3 124.5V130M984.8 121.5V130M989.2 124.5V130M993.7 124.5V130M998.2 124.5V130M1002.7 124.5V130M1007.2 120V130M1011.6 124.5V130M1016.1 124.5V130M1020.6 124.5V130M1025.1 124.5V130M1029.5 121.5V130M1034.0 124.5V130M1038.5 124.5V130M1043.0 124.5V130M1047.5 124.5V130M1051.9 120V130M1056.4 124.5V130M1060.9 124.5V130M1065.4 124.5V130M1069.9 124.5V130M1074.3 121.5V130M1078.8 124.5V130M1083.3 124.5V130M1087.8 124.5V130M1092.2 124.5V130M1096.7 120V130M1101.2 124.5V130M1105.7 124.5V130M1110.2 124.5V130M1114.6 124.5V130M1119.1 121.5V130M1123.6 124.5V130M1128.1 124.5V130" stroke="#141414" stroke-width="1.05" fill="none"/>
<path d="M229 130.2H1130" stroke="#111" stroke-width="1.3"/>
<path d="M224.5 607.4H229.5M220.0 602.9H229.5M224.5 598.4H229.5M224.5 593.9H229.5M224.5 589.5H229.5M224.5 585.0H229.5M221.0 580.5H229.5M224.5 576.0H229.5M224.5 571.6H229.5M224.5 567.1H229.5M224.5 562.6H229.5M220.0 558.1H229.5M224.5 553.6H229.5M224.5 549.2H229.5M224.5 544.7H229.5M224.5 540.2H229.5M221.0 535.7H229.5M224.5 531.3H229.5M224.5 526.8H229.5M224.5 522.3H229.5M224.5 517.8H229.5M220.0 513.3H229.5M224.5 508.9H229.5M224.5 504.4H229.5M224.5 499.9H229.5M224.5 495.4H229.5M221.0 490.9H229.5M224.5 486.5H229.5M224.5 482.0H229.5M224.5 477.5H229.5M224.5 473.0H229.5M220.0 468.6H229.5M224.5 464.1H229.5M224.5 459.6H229.5M224.5 455.1H229.5M224.5 450.6H229.5M221.0 446.2H229.5M224.5 441.7H229.5M224.5 437.2H229.5M224.5 432.7H229.5M224.5 428.3H229.5M220.0 423.8H229.5M224.5 419.3H229.5M224.5 414.8H229.5M224.5 410.3H229.5M224.5 405.9H229.5M221.0 401.4H229.5M224.5 396.9H229.5M224.5 392.4H229.5M224.5 388.0H229.5M224.5 383.5H229.5M220.0 379.0H229.5M224.5 374.5H229.5M224.5 370.0H229.5M224.5 365.6H229.5M224.5 361.1H229.5M221.0 356.6H229.5M224.5 352.1H229.5M224.5 347.7H229.5M224.5 343.2H229.5M224.5 338.7H229.5M220.0 334.2H229.5M224.5 329.7H229.5M224.5 325.3H229.5M224.5 320.8H229.5M224.5 316.3H229.5M221.0 311.8H229.5M224.5 307.4H229.5M224.5 302.9H229.5M224.5 298.4H229.5M224.5 293.9H229.5M220.0 289.4H229.5M224.5 285.0H229.5M224.5 280.5H229.5M224.5 276.0H229.5M224.5 271.5H229.5M221.0 267.1H229.5M224.5 262.6H229.5M224.5 258.1H229.5M224.5 253.6H229.5M224.5 249.1H229.5M220.0 244.7H229.5M224.5 240.2H229.5M224.5 235.7H229.5M224.5 231.2H229.5M224.5 226.7H229.5M221.0 222.3H229.5M224.5 217.8H229.5M224.5 213.3H229.5M224.5 208.8H229.5M224.5 204.4H229.5M220.0 199.9H229.5M224.5 195.4H229.5M224.5 190.9H229.5M224.5 186.4H229.5M224.5 182.0H229.5M221.0 177.5H229.5M224.5 173.0H229.5M224.5 168.5H229.5M224.5 164.1H229.5M224.5 159.6H229.5M220.0 155.1H229.5M224.5 150.6H229.5M224.5 146.1H229.5M224.5 141.7H229.5M224.5 137.2H229.5M221.0 132.7H229.5" stroke="#141414" stroke-width="1.05" fill="none"/>
<path d="M229.6 130V605" stroke="#111" stroke-width="1.3"/>
<g font-size="8.8" fill="#2a2a2a" text-anchor="middle">
<text x="247.7" y="118.6">-100</text>
<text x="289.2" y="118.6">-90</text>
<text x="334.0" y="118.6">-80</text>
<text x="378.7" y="118.6">-70</text>
<text x="423.5" y="118.6">-60</text>
<text x="468.3" y="118.6">-50</text>
<text x="513.1" y="118.6">-40</text>
<text x="557.9" y="118.6">-30</text>
<text x="602.6" y="118.6">-20</text>
<text x="647.4" y="118.6">-10</text>
<text x="693.7" y="118.6">0</text>
<text x="739.3" y="118.6">10</text>
<text x="784.1" y="118.6">20</text>
<text x="828.8" y="118.6">30</text>
<text x="873.6" y="118.6">40</text>
<text x="918.4" y="118.6">50</text>
<text x="963.2" y="118.6">60</text>
<text x="1008.0" y="118.6">70</text>
<text x="1052.7" y="118.6">80</text>
<text x="1097.5" y="118.6">90</text>
</g>
<g font-size="8.8" fill="#2a2a2a" text-anchor="middle">
<text transform="translate(218 600.6) rotate(-90)">-50</text>
<text transform="translate(218 555.8) rotate(-90)">-40</text>
<text transform="translate(218 511.0) rotate(-90)">-30</text>
<text transform="translate(218 466.3) rotate(-90)">-20</text>
<text transform="translate(218 421.5) rotate(-90)">-10</text>
<text transform="translate(218 376.7) rotate(-90)">0</text>
<text transform="translate(218 331.9) rotate(-90)">10</text>
<text transform="translate(218 287.1) rotate(-90)">20</text>
<text transform="translate(218 242.4) rotate(-90)">30</text>
<text transform="translate(218 197.6) rotate(-90)">40</text>
<text transform="translate(218 152.8) rotate(-90)">50</text>
</g>
<path d="M253.5 113V130" stroke="#7a4a20" stroke-width="1"/>
<path d="M353.2 110.2V130" stroke="#222" stroke-width="1.1"/>
<text x="240.5" y="153.4" font-size="14" font-weight="bold" fill="#000" textLength="212" lengthAdjust="spacingAndGlyphs">Demo version-only for evaluation</text>
</svg>
<!-- dialog -->
<div class="abs" style="left:468px;top:194px;width:414px;height:332px;background:#e9eef6;border:1px solid #17303f;border-bottom-color:#0a2c2e;border-radius:6px 6px 1px 1px;box-shadow:inset 0 0 0 1px #dfe9f5"></div>
<div class="abs" style="left:469px;top:195px;width:412px;height:25px;border-radius:5px 5px 0 0;background:linear-gradient(#8fb1d6 0,#9dbcdd 4px,#adc7e4 12px,#bdd3ea 20px,#c8daee 25px)"></div>
<div class="abs" style="left:469px;top:522px;width:412px;height:3px;background:linear-gradient(#c4e8e4,#7cc8c0 50%,#3a9a90)"></div>
<div class="abs cjk" style="left:475px;top:201px;font-size:12px;line-height:14px;color:#0c1420;font-weight:500">位图</div>
<div class="abs" style="left:847px;top:199px;width:30px;height:16px;border-radius:3px;border:1px solid #7a3428;background:linear-gradient(#e2a090 0,#d4654c 45%,#c03a22 55%,#d0553a 100%);box-shadow:inset 0 0 0 1px rgba(255,255,255,.35)"></div>
<svg class="abs" style="left:856px;top:202px" width="12" height="10" viewBox="0 0 12 10"><path d="M2.500 1.500L9.500 8.500M9.500 1.500L2.500 8.500" stroke="#5a2018" stroke-width="3.400"/><path d="M2.500 1.500L9.500 8.500M9.500 1.500L2.500 8.500" stroke="#fff" stroke-width="2"/></svg>
<div class="abs" style="left:472px;top:220px;width:406px;height:302px;background:#f0f0f0"></div>
<div class="abs" style="left:482px;top:230px;width:255px;height:279px;background:#f0f0f0;border:1px solid #707070"></div>
<div class="abs" style="left:483px;top:291px;width:253px;height:157px;background:#fff"></div>
<div class="btn simsun" style="left:790px;top:230px;width:74px;height:20px;font-size:12px;line-height:21px;border-color:#fff #5a5a5a #5a5a5a #fff"><span class="z">确定</span>(O)</div>
<div class="btn simsun" style="left:790px;top:256px;width:74px;height:21px;font-size:12px;line-height:21px;border-color:#fff #5a5a5a #5a5a5a #fff"><span class="z">取消</span>(C)</div>
<div class="chk" style="left:750px;top:291px"></div>
<div class="chk" style="left:750px;top:308px"></div>
<div class="chk" style="left:750px;top:325px"></div>
<div class="chk" style="left:750px;top:340px"></div>
<svg class="abs" style="left:750px;top:308px" width="11" height="28" viewBox="0 0 11 28"><path d="M2.500 5l2 2.300 4-4.300M2.500 22l2 2.300 4-4.300" fill="none" stroke="#000" stroke-width="1.800"/></svg>
<div class="abs cjk" style="left:767px;top:291px;font-size:12px;line-height:14px">反转</div>
<div class="abs cjk" style="left:767px;top:308px;font-size:12px;line-height:14px">灰度</div>
<div class="abs cjk" style="left:767px;top:325px;font-size:12px;line-height:14px">网点</div>
<div class="abs cjk" style="left:767px;top:340px;font-size:12px;line-height:14px">发亮处理</div>
<!-- dithered preview image -->
<svg class="abs" style="left:483px;top:291px" width="253" height="157" viewBox="483 291 253 157" shape-rendering="crispEdges">
<defs>
 <filter id="d80" x="0" y="0" width="1" height="1" color-interpolation-filters="sRGB"><feTurbulence type="fractalNoise" baseFrequency="0.95" numOctaves="2" seed="7" result="n"/><feColorMatrix in="n" type="matrix" values="0 0 0 0 0 0 0 0 0 0 0 0 0 0 0 -40 0 0 0 24.6" result="a"/><feComposite in="a" in2="SourceAlpha" operator="in"/></filter>
 <filter id="d55" x="0" y="0" width="1" height="1" color-interpolation-filters="sRGB"><feTurbulence type="fractalNoise" baseFrequency="0.95" numOctaves="2" seed="11" result="n"/><feColorMatrix in="n" type="matrix" values="0 0 0 0 0 0 0 0 0 0 0 0 0 0 0 -40 0 0 0 20.4" result="a"/><feComposite in="a" in2="SourceAlpha" operator="in"/></filter>
 <filter id="d35" x="0" y="0" width="1" height="1" color-interpolation-filters="sRGB"><feTurbulence type="fractalNoise" baseFrequency="0.95" numOctaves="2" seed="5" result="n"/><feColorMatrix in="n" type="matrix" values="0 0 0 0 0 0 0 0 0 0 0 0 0 0 0 -40 0 0 0 18.2" result="a"/><feComposite in="a" in2="SourceAlpha" operator="in"/></filter>
 <filter id="d95" x="0" y="0" width="1" height="1" color-interpolation-filters="sRGB"><feTurbulence type="fractalNoise" baseFrequency="0.95" numOctaves="2" seed="2" result="n"/><feColorMatrix in="n" type="matrix" values="0 0 0 0 0 0 0 0 0 0 0 0 0 0 0 -40 0 0 0 30" result="a"/><feComposite in="a" in2="SourceAlpha" operator="in"/></filter>
</defs>
<!-- handle -->
<path d="M559.300 337V299Q559.300 293.600 564.500 293.600H570Q575.200 293.600 575.200 299V336" fill="none" stroke="#000" stroke-width="1.600" shape-rendering="auto"/>
<!-- case -->
<g filter="url(#d80)"><path d="M538.600 338L565.500 339.500L616.500 334.500L617 394L566 412.500L543.500 404.500Z" fill="#000"/></g>
<g filter="url(#d55)"><path d="M565.500 412.500L617 394L622 392L608 400L590 418L575 419Z" fill="#000"/><path d="M596 330h4v5h-4zM583 333h6v3h-6z" fill="#000"/></g>
<path d="M565.800 340V412" stroke="#fff" stroke-width="1" stroke-dasharray="2 1.500" opacity=".8"/>
<path d="M563.500 340V411" stroke="#000" stroke-width="1"/>
<!-- marker column + head -->
<g filter="url(#d35)"><path d="M632.500 321.500h7V386h-7z" fill="#000"/></g>
<path d="M633 322V344M639 330V344" stroke="#000" stroke-width=".8" stroke-dasharray="2 1"/>
<g filter="url(#d80)"><path d="M621.600 345.500L658.600 344V353L621.600 355Z" fill="#000"/></g>
<g filter="url(#d55)"><path d="M634 355h4.500v31H634z" fill="#000"/><path d="M622 355h14v5h-14z" fill="#000"/></g>
<path d="M627.400 362.500h11.600v4h-11.600z" fill="#000"/>
<path d="M654.500 352Q655 372 661.500 384" fill="none" stroke="#000" stroke-width="1.500" shape-rendering="auto"/>
<!-- base -->
<g filter="url(#d35)"><path d="M606 393.500L636.600 384L670.200 385.200L670.200 391L641.300 401.400L620 399Z" fill="#000"/><path d="M617 386L636 383L612 398Z" fill="#000"/></g>
<g filter="url(#d55)"><path d="M637.800 400.700L641.300 401.400L670.200 388.700L670.200 411.800L644.700 436.100L636.600 433Z" fill="#000"/></g>
<!-- laptop -->
<g filter="url(#d95)"><path d="M604.500 396.500L638 400.700L637 428.500L600.300 424.500Z" fill="#000"/></g>
<g filter="url(#d80)"><path d="M600.300 425L635.500 433.200L630 441L597 431Z" fill="#000"/></g>
</svg>
</body>
</html>
